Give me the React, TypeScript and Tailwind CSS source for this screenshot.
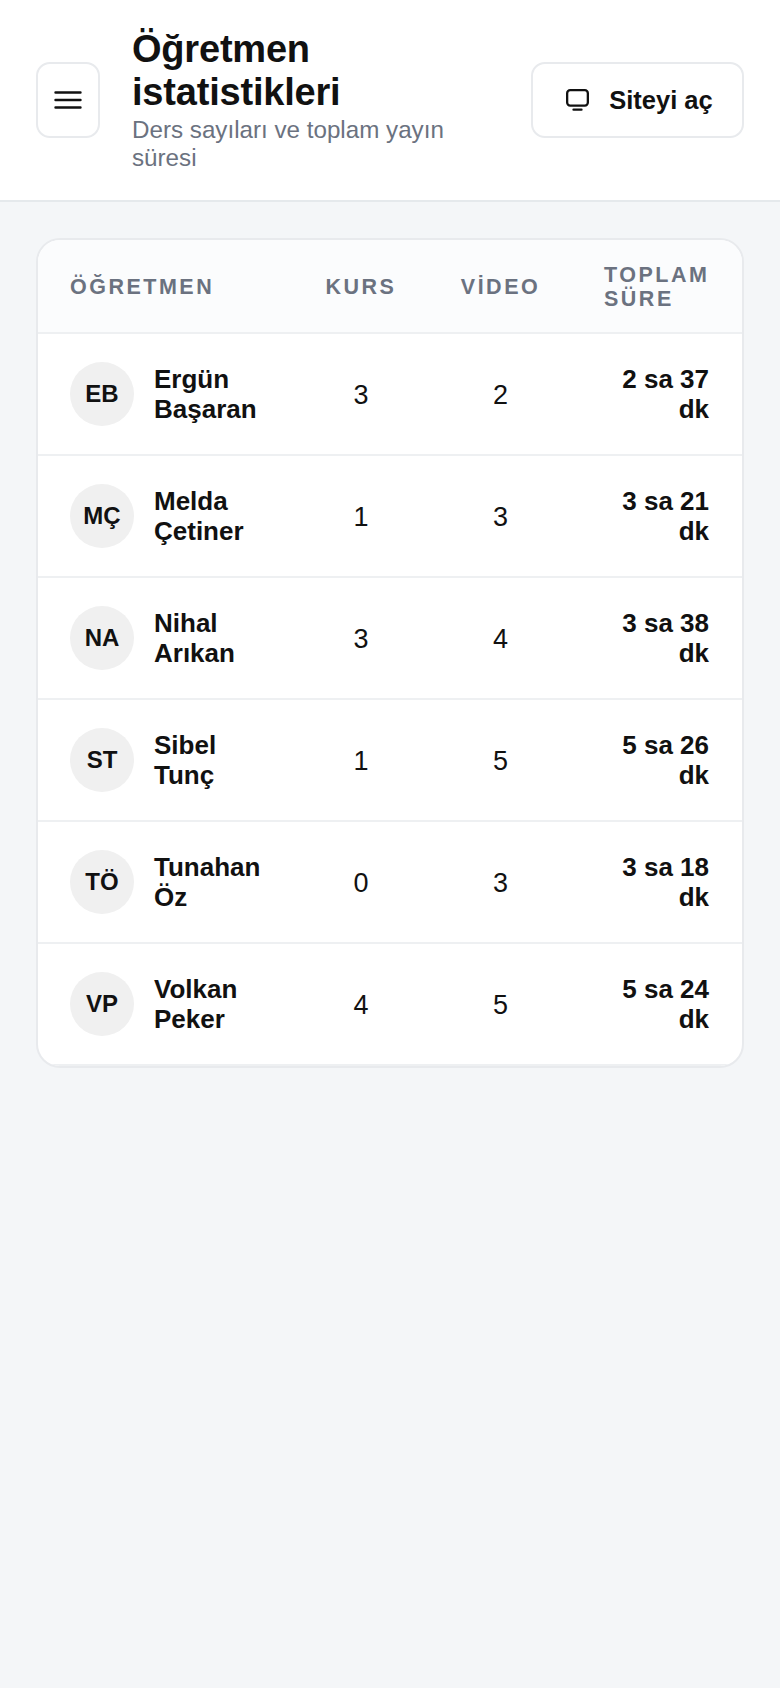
const rows = [
  ["EB", "Ergün Başaran", "3", "2", "2 sa 37 dk"],
  ["MÇ", "Melda Çetiner", "1", "3", "3 sa 21 dk"],
  ["NA", "Nihal Arıkan", "3", "4", "3 sa 38 dk"],
  ["ST", "Sibel Tunç", "1", "5", "5 sa 26 dk"],
  ["TÖ", "Tunahan Öz", "0", "3", "3 sa 18 dk"],
  ["VP", "Volkan Peker", "4", "5", "5 sa 24 dk"],
];

export default function App() {
  return (
    <div className="min-h-[1688px] bg-[#f4f6f8] font-['Liberation_Sans',sans-serif] text-[#111111]">
      <header className="flex h-[202px] items-center border-b-2 border-[#e5e9ec] bg-white pl-9 pr-9">
        <button className="flex h-[76px] w-16 shrink-0 items-center justify-center rounded-[14px] border-2 border-[#e8eaed] bg-white">
          <svg width="28" height="20" viewBox="0 0 28 20" fill="none" stroke="#111111" strokeWidth="2.4" strokeLinecap="round">
            <path d="M1.5 2.5h25M1.5 10h25M1.5 17.5h25" />
          </svg>
        </button>
        <div className="ml-8 min-w-0 flex-1">
          <h1 className="w-[340px] text-[38px] font-bold leading-[43px] tracking-[-0.2px]">Öğretmen istatistikleri</h1>
          <p className="mt-0.5 w-[340px] text-[24.2px] leading-7 text-[#6b7280]">Ders sayıları ve toplam yayın süresi</p>
        </div>
        <button className="flex h-[76px] w-[213px] shrink-0 items-center justify-center gap-5 rounded-[14px] border-2 border-[#e8eaed] bg-white pl-1 text-[25.5px] font-bold">
          <svg width="23" height="22" viewBox="0 0 23 22" fill="none" stroke="#111111" strokeWidth="2.3" strokeLinecap="round" strokeLinejoin="round">
            <rect x="1.15" y="1.15" width="20.7" height="15.4" rx="3" />
            <path d="M7.5 20.7h8" />
          </svg>
          Siteyi aç
        </button>
      </header>
      <main className="px-9 pt-9">
        <div className="overflow-hidden rounded-3xl border-2 border-[#e8eaed] bg-white">
          <div className="grid h-[94px] grid-cols-[221px_140px_139px_1fr] items-center border-b-2 border-[#eef0f2] bg-[#fbfcfd] pl-8 pr-[33px] pt-0.5 text-[21.5px] font-bold leading-6 tracking-[2.5px] text-[#6b7280]">
            <div>ÖĞRETMEN</div>
            <div className="text-center">KURS</div>
            <div className="text-center">VİDEO</div>
            <div className="pl-[34px]">TOPLAM SÜRE</div>
          </div>
          {rows.map((r) => (
            <div key={r[0]} className="grid h-[122px] grid-cols-[221px_140px_139px_1fr] items-center border-b-2 border-[#eef0f2] pl-8 pr-[33px]">
              <div className="flex items-center gap-5">
                <div className="flex h-16 w-16 shrink-0 items-center justify-center rounded-full bg-[#f0f0f0] text-2xl font-bold">{r[0]}</div>
                <div className="w-[120px] text-[26px] font-bold leading-[30px]">{r[1]}</div>
              </div>
              <div className="pt-0.5 text-center text-[27px]">{r[2]}</div>
              <div className="pt-0.5 text-center text-[27px]">{r[3]}</div>
              <div className="pl-[34px] text-right text-[26px] font-bold leading-[30px]">{r[4]}</div>
            </div>
          ))}
        </div>
      </main>
    </div>
  );
}
